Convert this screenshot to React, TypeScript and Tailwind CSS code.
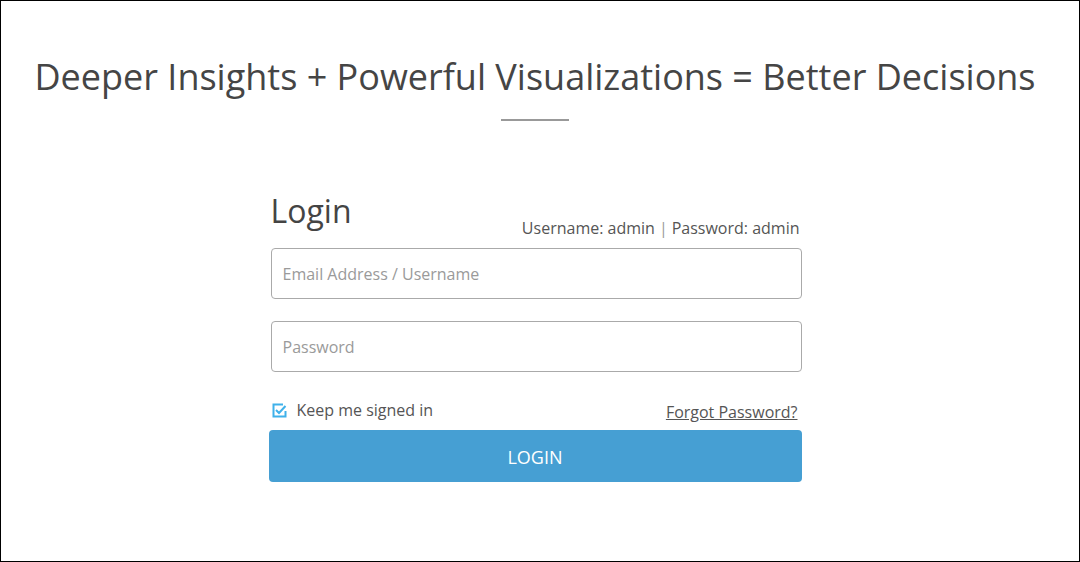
import React from "react";

export default function App() {
  return (
    <div
      className="w-[1080px] h-[562px] border border-black bg-white text-[#444] flex flex-col items-center pr-[10px]"
      style={{ fontFamily: '"Open Sans", sans-serif' }}
    >
      <h1 className="mt-[52px] text-[36px] leading-[48px] text-[#454545] whitespace-nowrap">
        Deeper Insights + Powerful Visualizations = Better Decisions
      </h1>
      <div className="mt-[18px] w-[68px] h-[2px] bg-[#999]" />
      <div className="mt-[72px] w-[533px] flex flex-col">
        <div className="flex items-end justify-between pl-[2px] pr-[2px]">
          <div className="text-[32px] leading-[36px] text-[#444]">Login</div>
          <div className="text-[16px] leading-[20px] text-[#555] mb-[-9px]">
            Username: admin<span className="mx-[4px] text-[#999]">|</span>Password: admin
          </div>
        </div>
        <input
          className="mt-[19px] ml-[2px] w-[531px] h-[51px] border border-[#aaa] rounded-[4px] px-[11px] text-[16px] text-[#555] placeholder:text-[#9a9a9a] outline-none"
          placeholder="Email Address / Username"
        />
        <input
          className="mt-[22px] ml-[2px] w-[531px] h-[51px] border border-[#aaa] rounded-[4px] px-[11px] text-[16px] text-[#555] placeholder:text-[#9a9a9a] outline-none"
          placeholder="Password"
          type="password"
        />
        <div className="mt-[25px] flex items-center justify-between pl-[3px] pr-[4px]">
          <div className="flex items-center">
            <svg width="15" height="15" viewBox="0 0 15 15" fill="none">
              <path d="M11 1.5H1.5V13.5H13.5V8" stroke="#3fb1ea" strokeWidth="2" />
              <path d="M4 7L7 10L13.5 3" stroke="#3fb1ea" strokeWidth="2" />
            </svg>
            <span className="ml-[10px] text-[16px] leading-[22px] text-[#555]">Keep me signed in</span>
          </div>
          <a className="text-[16px] leading-[22px] text-[#555] underline mt-[4px]">Forgot Password?</a>
        </div>
        <button className="mt-[7px] w-[533px] h-[52px] pt-[2px] rounded-[4px] bg-[#469fd3] text-white text-[18px]">
          LOGIN
        </button>
      </div>
    </div>
  );
}
